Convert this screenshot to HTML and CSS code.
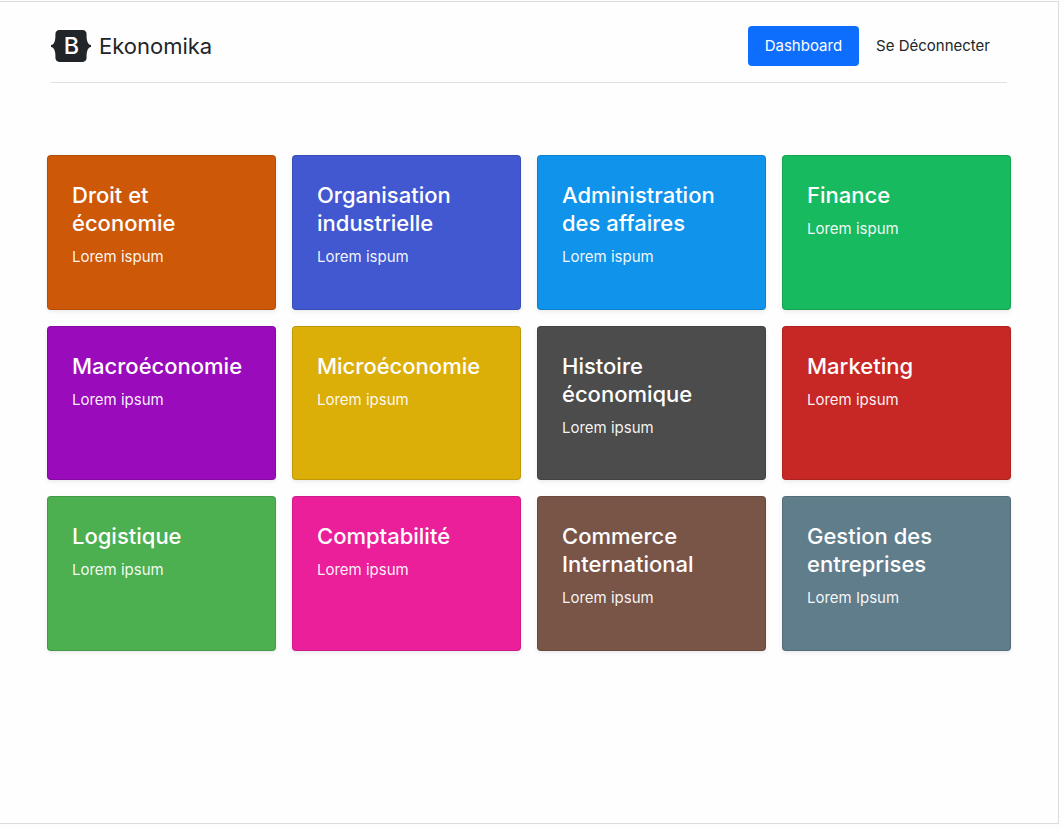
FILE: index.html
```html
<!DOCTYPE html>
<html lang="fr">
<head>
<meta charset="utf-8">
<meta name="viewport" content="width=device-width, initial-scale=1">
<title>Ekonomika</title>
<link rel="stylesheet" href="styles.css">
</head>
<body>
<div class="page">
  <header class="header">
    <a class="brand" href="#">
      <svg class="brand-logo" width="40" height="32" viewBox="0 0 118 94" aria-hidden="true">
        <path fill="currentColor" d="M24.509 0c-6.733 0-11.715 5.893-11.492 12.284.214 6.14-.064 14.092-2.066 20.577C8.943 39.365 5.547 43.485 0 44.014v5.972c5.547.529 8.943 4.649 10.951 11.153 2.002 6.485 2.28 14.437 2.066 20.577C12.794 88.106 17.776 94 24.51 94H93.5c6.733 0 11.714-5.893 11.491-12.284-.214-6.14.064-14.092 2.066-20.577 2.009-6.504 5.396-10.624 10.943-11.153v-5.972c-5.547-.529-8.934-4.649-10.943-11.153-2.002-6.484-2.28-14.437-2.066-20.577C105.214 5.894 100.233 0 93.5 0H24.508z"/>
        <text class="brand-letter" x="60" y="72" text-anchor="middle">B</text>
      </svg>
      <span class="brand-name">Ekonomika</span>
    </a>
    <nav class="nav">
      <a class="nav-link nav-link-active" href="#">Dashboard</a>
      <a class="nav-link" href="#">Se Déconnecter</a>
    </nav>
  </header>
  <main class="cards">
    <article class="card orange"><h2 class="card-title">Droit et économie</h2><p class="card-text">Lorem ispum</p></article>
    <article class="card indigo"><h2 class="card-title">Organisation industrielle</h2><p class="card-text">Lorem ispum</p></article>
    <article class="card blue"><h2 class="card-title">Administration des affaires</h2><p class="card-text">Lorem ispum</p></article>
    <article class="card green"><h2 class="card-title">Finance</h2><p class="card-text">Lorem ispum</p></article>
    <article class="card purple"><h2 class="card-title">Macroéconomie</h2><p class="card-text">Lorem ipsum</p></article>
    <article class="card yellow"><h2 class="card-title">Microéconomie</h2><p class="card-text">Lorem ipsum</p></article>
    <article class="card gray"><h2 class="card-title">Histoire économique</h2><p class="card-text">Lorem ipsum</p></article>
    <article class="card red"><h2 class="card-title">Marketing</h2><p class="card-text">Lorem ipsum</p></article>
    <article class="card leaf"><h2 class="card-title">Logistique</h2><p class="card-text">Lorem ipsum</p></article>
    <article class="card pink"><h2 class="card-title">Comptabilité</h2><p class="card-text">Lorem ipsum</p></article>
    <article class="card brown"><h2 class="card-title">Commerce International</h2><p class="card-text">Lorem ipsum</p></article>
    <article class="card slate"><h2 class="card-title">Gestion des entreprises</h2><p class="card-text">Lorem Ipsum</p></article>
  </main>
</div>
</body>
</html>
```
FILE: styles.css
```css
* {
  box-sizing: border-box;
}

body {
  margin: 0;
  padding: 1px 2px 5px 0;
  min-height: 100vh;
  display: flex;
  background: #fdfdfd;
  color: #212529;
  font-family: Inter, "Liberation Sans", sans-serif;
  font-size: 15px;
  line-height: 24px;
}

.page {
  flex: 1;
  padding: 24px 47px;
  background: #fefefe;
  border: solid #dcdcdc;
  border-width: 1px 1px 1px 0;
}

.header {
  display: flex;
  align-items: center;
  justify-content: space-between;
  margin: 0 4px 72px;
  padding-bottom: 16px;
  border-bottom: 1px solid #dee2e6;
}

.brand {
  display: flex;
  align-items: center;
  gap: 8px;
  color: #212529;
  text-decoration: none;
}

.brand-letter {
  fill: #fff;
  font-size: 69px;
  font-weight: 500;
}

.brand-name {
  font-size: 22px;
}

.nav {
  display: flex;
}

.nav-link {
  padding: 8px 17px;
  border-radius: 4px;
  color: #212529;
  text-decoration: none;
}

.nav-link-active {
  background: #0d6efd;
  color: #fff;
}

.cards {
  display: grid;
  grid-template-columns: repeat(4, 1fr);
  grid-auto-rows: 1fr;
  gap: 16px;
  min-height: 496px;
}

.card {
  padding: 25px 24px 24px;
  border: 1px solid rgba(0, 0, 0, 0.125);
  border-radius: 4px;
  box-shadow: 0 2px 4px rgba(0, 0, 0, 0.075);
  color: #fff;
}

.card-title {
  margin: 0 0 8px;
  font-size: 22px;
  font-weight: 500;
  line-height: 28px;
}

.card-text {
  margin: 0;
  color: rgba(255, 255, 255, 0.95);
}

.orange { background-color: #cd5808; }
.indigo { background-color: #4158d0; }
.blue { background-color: #0f93eb; }
.green { background-color: #18ba60; }
.purple { background-color: #9a0bbc; }
.yellow { background-color: #dcae08; }
.gray { background-color: #4c4c4c; }
.red { background-color: #c72725; }
.leaf { background-color: #4caf50; }
.pink { background-color: #ec1f9b; }
.brown { background-color: #795548; }
.slate { background-color: #607d8b; }
```
